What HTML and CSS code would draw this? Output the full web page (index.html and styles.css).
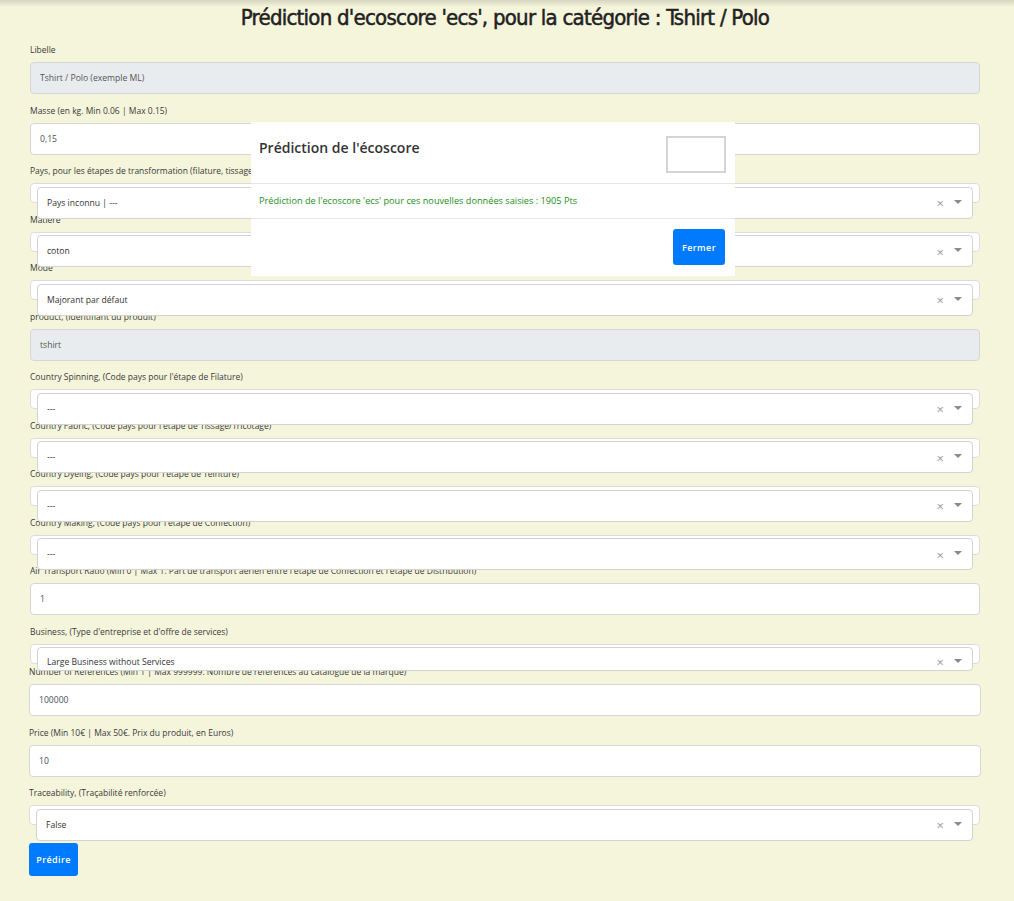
FILE: index.html
```html
<!DOCTYPE html>
<html lang="fr">
<head>
<meta charset="utf-8">
<title>Prédiction d'ecoscore</title>
<link rel="stylesheet" href="styles.css">
</head>
<body>
<div class="page">
  <h1 class="title">Prédiction d'ecoscore 'ecs', pour la catégorie : Tshirt / Polo</h1>

  <div class="group">
    <label class="lbl">Libelle</label>
    <div class="input disabled">Tshirt / Polo (exemple ML)</div>
  </div>
  <div class="group">
    <label class="lbl">Masse (en kg. Min 0.06 | Max 0.15)</label>
    <div class="input">0,15</div>
  </div>
  <div class="group">
    <label class="lbl">Pays, pour les étapes de transformation (filature, tissage/tricotage, teinture, confection)</label>
    <div class="sel"><div class="sel-box"><span class="sel-text">Pays inconnu | ---</span><span class="clear">×</span><svg class="arrow" width="8" height="4" viewBox="0 0 8 4"><path d="M0 0H8L4 4Z" fill="#8a8a8a"/></svg></div></div>
  </div>
  <div class="group">
    <label class="lbl">Matière</label>
    <div class="sel"><div class="sel-box"><span class="sel-text">coton</span><span class="clear">×</span><svg class="arrow" width="8" height="4" viewBox="0 0 8 4"><path d="M0 0H8L4 4Z" fill="#8a8a8a"/></svg></div></div>
  </div>
  <div class="group">
    <label class="lbl">Mode</label>
    <div class="sel"><div class="sel-box"><span class="sel-text">Majorant par défaut</span><span class="clear">×</span><svg class="arrow" width="8" height="4" viewBox="0 0 8 4"><path d="M0 0H8L4 4Z" fill="#8a8a8a"/></svg></div></div>
  </div>
  <div class="group">
    <label class="lbl">product, (Identifiant du produit)</label>
    <div class="input disabled">tshirt</div>
  </div>
  <div class="group">
    <label class="lbl">Country Spinning, (Code pays pour l'étape de Filature)</label>
    <div class="sel"><div class="sel-box"><span class="sel-text">---</span><span class="clear">×</span><svg class="arrow" width="8" height="4" viewBox="0 0 8 4"><path d="M0 0H8L4 4Z" fill="#8a8a8a"/></svg></div></div>
  </div>
  <div class="group">
    <label class="lbl">Country Fabric, (Code pays pour l'étape de Tissage/Tricotage)</label>
    <div class="sel"><div class="sel-box"><span class="sel-text">---</span><span class="clear">×</span><svg class="arrow" width="8" height="4" viewBox="0 0 8 4"><path d="M0 0H8L4 4Z" fill="#8a8a8a"/></svg></div></div>
  </div>
  <div class="group">
    <label class="lbl">Country Dyeing, (Code pays pour l'étape de Teinture)</label>
    <div class="sel"><div class="sel-box"><span class="sel-text">---</span><span class="clear">×</span><svg class="arrow" width="8" height="4" viewBox="0 0 8 4"><path d="M0 0H8L4 4Z" fill="#8a8a8a"/></svg></div></div>
  </div>
  <div class="group">
    <label class="lbl">Country Making, (Code pays pour l'étape de Confection)</label>
    <div class="sel"><div class="sel-box"><span class="sel-text">---</span><span class="clear">×</span><svg class="arrow" width="8" height="4" viewBox="0 0 8 4"><path d="M0 0H8L4 4Z" fill="#8a8a8a"/></svg></div></div>
  </div>
  <div class="group">
    <label class="lbl">Air Transport Ratio (Min 0 | Max 1. Part de transport aérien entre l'étape de Confection et l'étape de Distribution)</label>
    <div class="input">1</div>
  </div>
  <div class="group tight">
    <label class="lbl">Business, (Type d'entreprise et d'offre de services)</label>
    <div class="sel"><div class="sel-box short"><span class="sel-text">Large Business without Services</span><span class="clear">×</span><svg class="arrow" width="8" height="4" viewBox="0 0 8 4"><path d="M0 0H8L4 4Z" fill="#8a8a8a"/></svg></div></div>
  </div>
  <div class="group wide">
    <label class="lbl">Number of References (Min 1 | Max 999999. Nombre de références au catalogue de la marque)</label>
    <div class="input">100000</div>
  </div>
  <div class="group wide">
    <label class="lbl">Price (Min 10€ | Max 50€. Prix du produit, en Euros)</label>
    <div class="input">10</div>
  </div>
  <div class="group last">
    <label class="lbl">Traceability, (Traçabilité renforcée)</label>
    <div class="sel"><div class="sel-box"><span class="sel-text">False</span><span class="clear">×</span><svg class="arrow" width="8" height="4" viewBox="0 0 8 4"><path d="M0 0H8L4 4Z" fill="#8a8a8a"/></svg></div></div>
  </div>
  <button class="btn btn-predict">Prédire</button>
</div>

<div class="modal">
  <div class="modal-header">
    <h2 class="modal-title">Prédiction de l'écoscore</h2>
    <div class="close-box"></div>
  </div>
  <div class="modal-body">Prédiction de l'ecoscore 'ecs' pour ces nouvelles données saisies : 1905 Pts</div>
  <div class="modal-footer">
    <button class="btn btn-close">Fermer</button>
  </div>
</div>
</body>
</html>
```

FILE: styles.css
```css
html, body {
  margin: 0;
  padding: 0;
}
body {
  background: linear-gradient(to bottom, rgba(0,0,0,0.13), rgba(0,0,0,0) 7px), #f5f5dc;
  font-family: "Open Sans", "Noto Sans", sans-serif;
  color: #333;
  min-height: 901px;
  position: relative;
}
.page {
  padding: 0 34px 0 30px;
}
.title {
  margin: 0 0 7px;
  height: 36px;
  line-height: 36px;
  text-align: center;
  font-family: "DejaVu Sans Condensed", "Lato", sans-serif;
  font-weight: 400;
  font-size: 22px;
  color: #222;
  letter-spacing: -0.75px;
  -webkit-text-stroke: 0.5px #222;
}
.group {
  margin-bottom: 9.5px;
}
.group.tight {
  margin-bottom: 1.5px;
}
.group.wide {
  margin-right: -1px;
  margin-left: -1px;
}
.group.last {
  margin-left: -1px;
  margin-bottom: 18px;
}
.lbl {
  display: block;
  height: 14px;
  line-height: 14px;
  margin-bottom: 5px;
  font-size: 8.5px;
  color: #3a3a3a;
  white-space: nowrap;
  overflow: hidden;
}
.input {
  box-sizing: border-box;
  height: 32px;
  border: 1px solid #d6d6d6;
  border-radius: 4px;
  background: #fff;
  padding: 0 9px;
  display: flex;
  align-items: center;
  font-size: 8.6px;
  color: #495057;
}
.input.disabled {
  background: #e9ecef;
  color: #555;
}
.sel {
  position: relative;
  box-sizing: border-box;
  height: 20px;
  border: 1px solid #dcdcdc;
  border-radius: 4px;
  background: #fff;
}
.sel-box {
  position: absolute;
  top: 2.5px;
  left: 6px;
  right: 6px;
  box-sizing: border-box;
  height: 32px;
  border: 1px solid #d3d3d3;
  border-radius: 4px;
  background: #fff;
  display: flex;
  align-items: center;
  padding: 0 10px 0 9px;
  font-size: 8.6px;
  color: #333;
}
.sel-box.short {
  height: 24px;
  align-items: flex-start;
  padding-top: 8px;
}
.sel-text {
  flex: 1;
}
.clear {
  font-size: 13px;
  line-height: 1;
  color: #9a9a9a;
  margin-right: 10px;
  position: relative;
  top: 1px;
}
.arrow {
  display: block;
  margin-top: -2px;
}
.sel-box.short .clear {
  top: 0;
}
.sel-box.short .arrow {
  margin-top: 3px;
}
.btn {
  border: 0;
  border-radius: 3px;
  background: #007bff;
  color: #fff;
  font-family: "Open Sans", "Noto Sans", sans-serif;
  font-weight: 600;
  font-size: 9px;
  letter-spacing: 0.4px;
  padding: 0;
  cursor: pointer;
}
.btn-predict {
  display: block;
  margin-left: -1px;
  width: 49px;
  height: 33px;
}
.modal {
  position: absolute;
  left: 251px;
  top: 122px;
  width: 484px;
  background: #fff;
}
.modal-header {
  display: flex;
  justify-content: space-between;
  align-items: flex-start;
  padding: 14px 9px 10px 8px;
  border-bottom: 1px solid #e6e6e6;
}
.modal-title {
  margin: 0;
  line-height: 23px;
  font-size: 14px;
  font-weight: 600;
  color: #333;
}
.close-box {
  box-sizing: border-box;
  width: 60px;
  height: 37px;
  border: 2px solid #d4d4d4;
  background: #fff;
}
.modal-body {
  height: 34px;
  line-height: 34px;
  padding: 0 8px;
  font-size: 9.2px;
  color: #239023;
  border-bottom: 1px solid #e6e6e6;
}
.modal-footer {
  display: flex;
  justify-content: flex-end;
  padding: 10px 10px 11px;
}
.btn-close {
  width: 52px;
  height: 36px;
}
```
